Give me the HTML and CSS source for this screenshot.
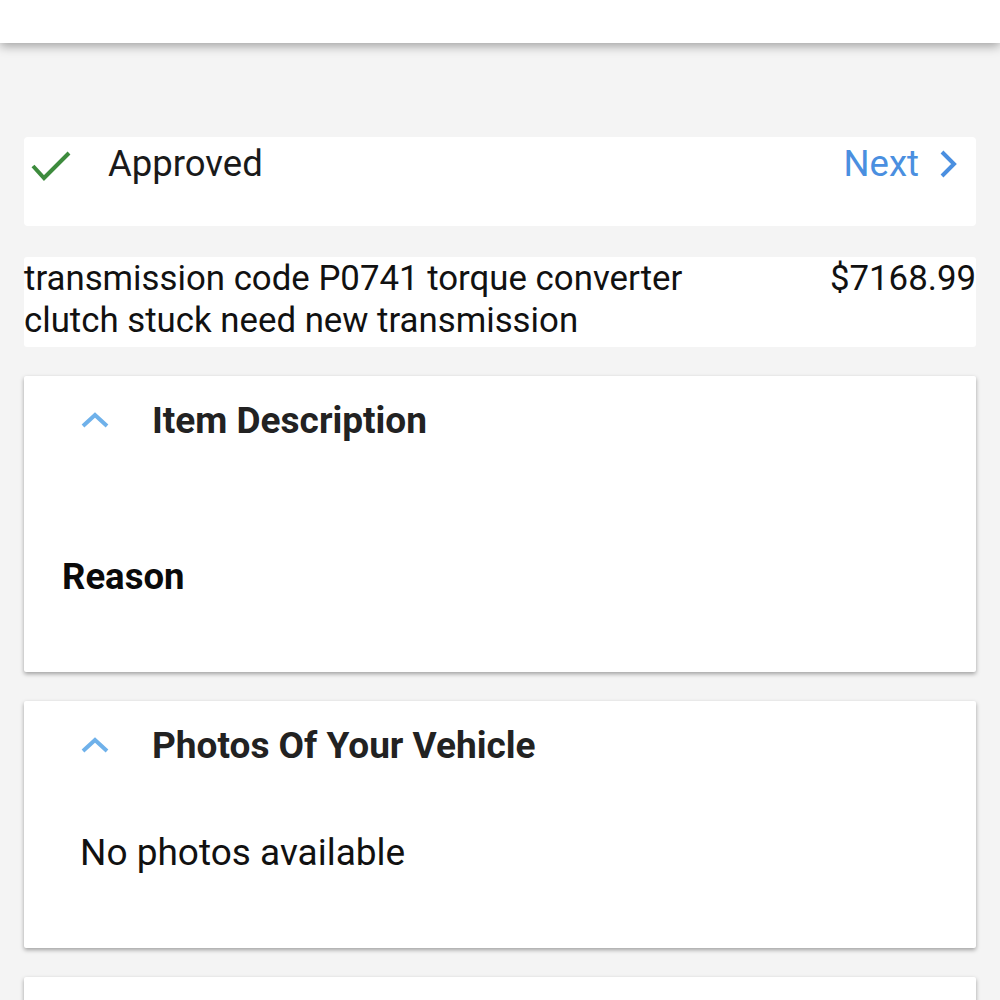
FILE: index.html
```html
<!DOCTYPE html>
<html lang="en">
<head>
<meta charset="utf-8">
<title>Item</title>
<link rel="stylesheet" href="styles.css">
</head>
<body>
<header class="topbar"></header>
<main class="content">
  <section class="status">
    <div class="status-left">
      <svg class="check" width="42" height="32" viewBox="0 0 42 32"><path d="M3 16 L14 28 L39 3" fill="none" stroke="#3d8b3d" stroke-width="4"/></svg>
      <span class="status-text">Approved</span>
    </div>
    <a class="next">Next
      <svg class="next-chev" width="18" height="28" viewBox="0 0 18 28"><path d="M3 2 L15 14 L3 26" fill="none" stroke="#4a8fe0" stroke-width="4"/></svg>
    </a>
  </section>
  <section class="item-row">
    <p class="item-name">transmission code P0741 torque converter clutch stuck need new transmission</p>
    <span class="item-price">$7168.99</span>
  </section>
  <section class="card">
    <div class="card-head">
      <svg class="chev" width="28" height="16" viewBox="0 0 28 16"><path d="M2 14 L14 3 L26 14" fill="none" stroke="#6fb1ea" stroke-width="4"/></svg>
      <h2 class="card-title">Item Description</h2>
    </div>
    <div class="card-body reason-body">
      <h3 class="reason">Reason</h3>
    </div>
  </section>
  <section class="card">
    <div class="card-head">
      <svg class="chev" width="28" height="16" viewBox="0 0 28 16"><path d="M2 14 L14 3 L26 14" fill="none" stroke="#6fb1ea" stroke-width="4"/></svg>
      <h2 class="card-title">Photos Of Your Vehicle</h2>
    </div>
    <div class="card-body photos-body">
      <p class="no-photos">No photos available</p>
    </div>
  </section>
  <section class="card card-last"></section>
</main>
</body>
</html>
```

FILE: styles.css
```css
* { box-sizing: border-box; }
html, body { margin: 0; padding: 0; }
body {
  background: #f4f4f4;
  font-family: Roboto, "Noto Sans", sans-serif;
  color: #111;
  height: 1000px;
  overflow: hidden;
}
.topbar {
  height: 43px;
  background: #fff;
  box-shadow: 0 3px 10px rgba(0,0,0,0.35);
  position: relative;
  z-index: 2;
}
.content {
  padding: 94px 24px 0;
  display: flex;
  flex-direction: column;
}
.status {
  height: 89px;
  background: #fff;
  border-radius: 4px;
  display: flex;
  justify-content: space-between;
  align-items: flex-start;
  padding: 5px 19px 0 6px;
}
.status-left {
  display: flex;
  align-items: center;
}
.check { display: block; margin-top: 4px; }
.status-text {
  margin-left: 36px;
  font-size: 36.5px;
  line-height: 44px;
  color: #1a1a1a;
}
.next {
  display: flex;
  align-items: center;
  color: #4a8fe0;
  font-size: 36.5px;
  line-height: 44px;
}
.next-chev { margin-left: 20px; display: block; }
.item-row {
  margin-top: 31px;
  background: #fff;
  border-radius: 3px;
  display: flex;
  justify-content: space-between;
  align-items: flex-start;
  padding-bottom: 6px;
}
.item-name {
  margin: 0;
  font-size: 34.8px;
  line-height: 42px;
  width: 720px;
  color: #111;
}
.item-price {
  font-size: 34.8px;
  line-height: 42px;
  color: #111;
}
.card {
  margin-top: 29px;
  background: #fff;
  box-shadow: 0 2px 4px rgba(0,0,0,0.35);
  border-radius: 2px;
}
.card-head {
  height: 90px;
  display: flex;
  align-items: center;
  padding-left: 57px;
}
.chev { display: block; margin-top: -2px; }
.card-title {
  margin: 0 0 0 43px;
  font-size: 37px;
  line-height: 40px;
  font-weight: 700;
  color: #222;
}
.reason-body { padding: 91px 0 75px 38px; }
.reason {
  margin: 0;
  font-size: 36.5px;
  line-height: 40px;
  font-weight: 700;
  color: #0a0a0a;
}
.photos-body { padding: 42px 0 75px 56px; }
.no-photos {
  margin: 0;
  font-size: 37px;
  line-height: 40px;
  color: #111;
}
.card-last { height: 60px; }
```
